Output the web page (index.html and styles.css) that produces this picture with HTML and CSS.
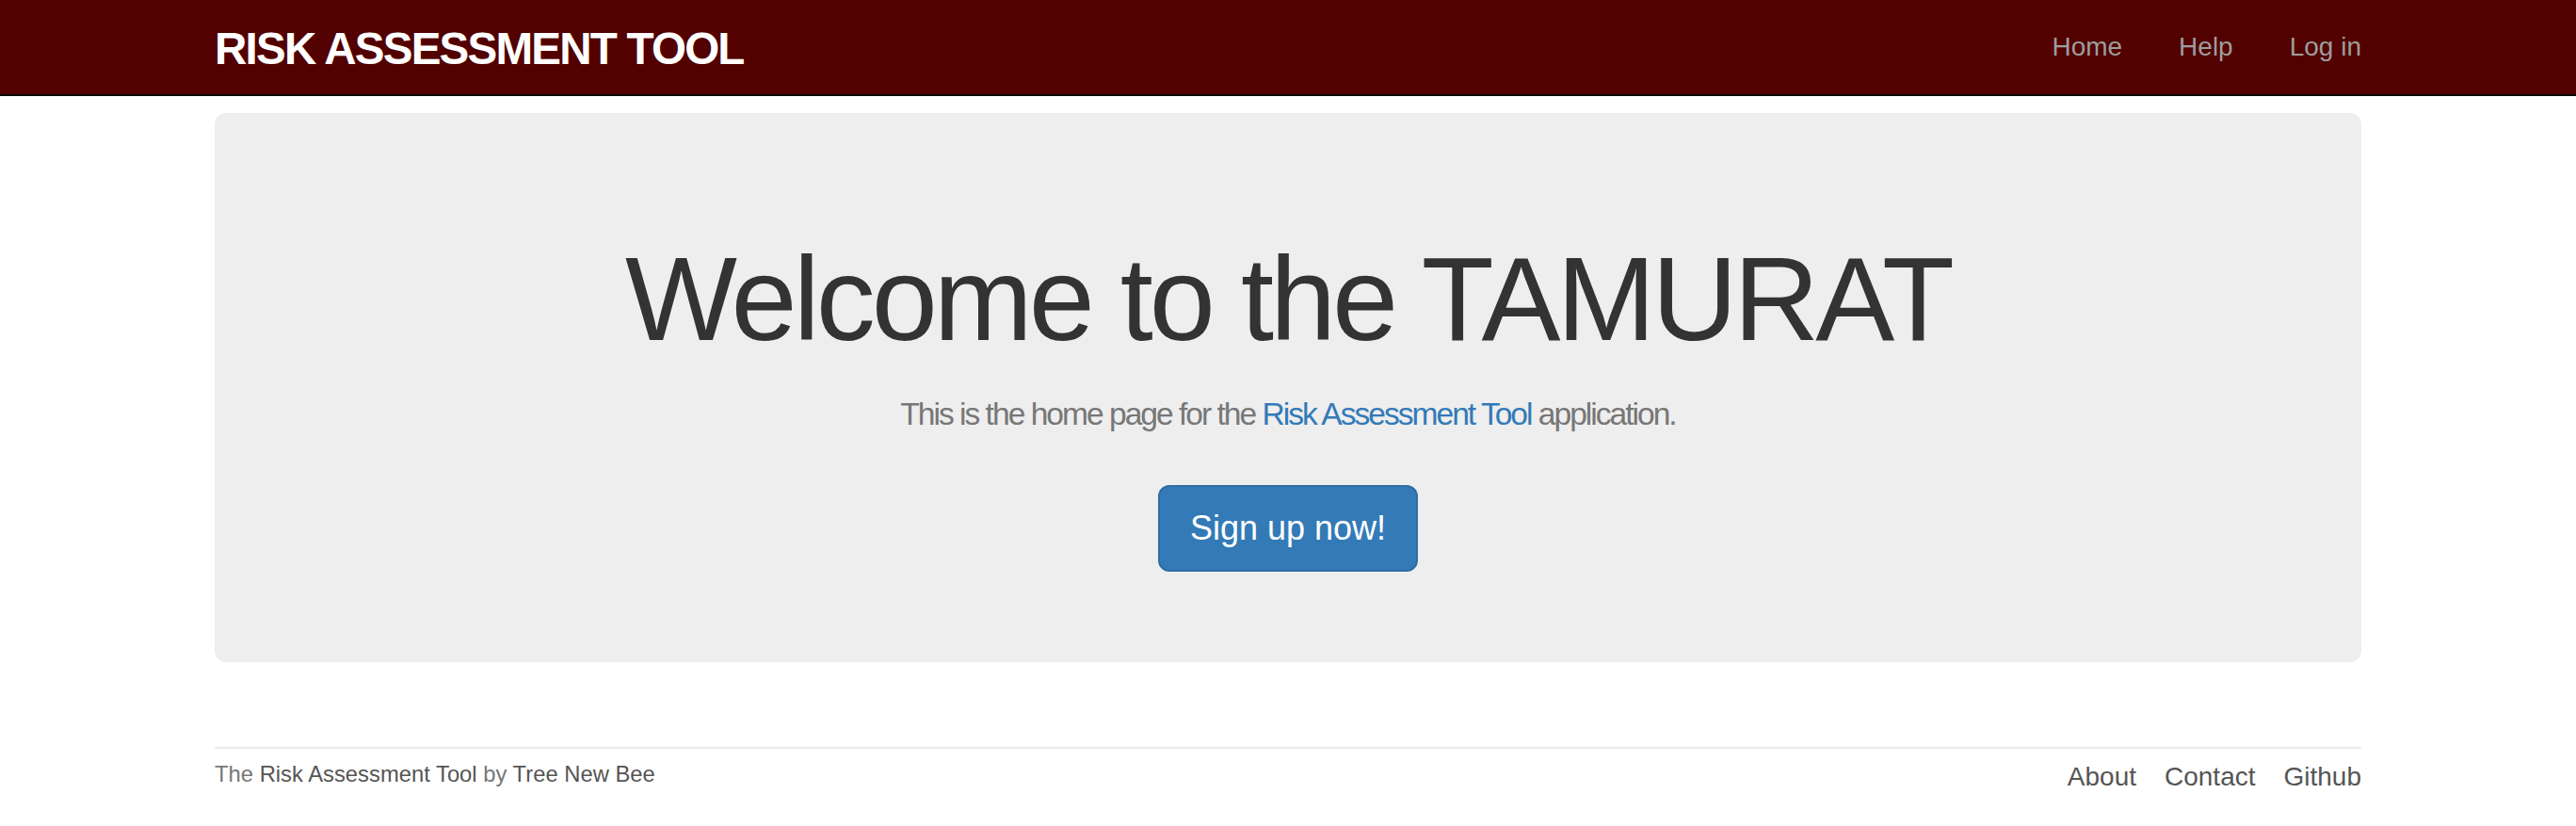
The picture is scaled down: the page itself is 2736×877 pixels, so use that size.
FILE: index.html
```html
<!DOCTYPE html>
<html lang="en">
<head>
<meta charset="utf-8">
<title>Risk Assessment Tool</title>
<link rel="stylesheet" href="styles.css">
</head>
<body>
  <header class="navbar">
    <div class="container navbar-inner">
      <a class="logo" href="#">Risk Assessment Tool</a>
      <nav>
        <ul class="nav">
          <li><a href="#">Home</a></li>
          <li><a href="#">Help</a></li>
          <li><a href="#">Log in</a></li>
        </ul>
      </nav>
    </div>
  </header>
  <main class="container">
    <section class="jumbotron">
      <h1 class="title">Welcome to the TAMURAT</h1>
      <h2 class="subtitle">This is the home page for the <a href="#">Risk Assessment Tool</a> application.</h2>
      <div class="cta">
        <a class="btn-primary" href="#">Sign up now!</a>
      </div>
    </section>
    <footer class="footer">
      <small class="credit">The <a href="#">Risk Assessment Tool</a> by <a href="#">Tree New Bee</a></small>
      <ul class="footer-links">
        <li><a href="#">About</a></li>
        <li><a href="#">Contact</a></li>
        <li><a href="#">Github</a></li>
      </ul>
    </footer>
  </main>
</body>
</html>
```
FILE: styles.css
```css
* { box-sizing: border-box; }

html, body {
  margin: 0;
  padding: 0;
  background: #fff;
}

body {
  font-family: "Liberation Sans", Arial, Helvetica, sans-serif;
  font-size: 28px;
  line-height: 40px;
  color: #333;
}

a { text-decoration: none; }

.container {
  width: 2280px;
  margin: 0 auto;
}

/* Navbar */
.navbar {
  height: 102px;
  background: #520000;
  border-bottom: 2px solid #080808;
}

.navbar-inner {
  display: flex;
  justify-content: space-between;
  align-items: flex-start;
}

.logo {
  padding-top: 18px;
  font-size: 47.6px;
  line-height: 68px;
  font-weight: bold;
  letter-spacing: -1.8px;
  text-transform: uppercase;
  color: #fff;
}

.nav {
  display: flex;
  list-style: none;
  margin: 0 -30px 0 0;
  padding: 0;
}

.nav a {
  display: block;
  padding: 30px;
  line-height: 40px;
  font-size: 28px;
  color: #9d9d9d;
}

/* Jumbotron */
main.container {
  padding-top: 18px;
}

.jumbotron {
  background: #eee;
  border-radius: 12px;
  padding: 96px 120px;
  text-align: center;
  margin-bottom: 90px;
}

.title {
  margin: 33px 0 0;
  font-size: 126px;
  line-height: 1.1;
  font-weight: 500;
  letter-spacing: -4px;
  color: #333;
}

.subtitle {
  margin: 34px 0 0;
  font-size: 33.6px;
  line-height: 1.1;
  font-weight: normal;
  letter-spacing: -2px;
  color: #777;
}

.subtitle a { color: #337ab7; }

.cta {
  display: flex;
  justify-content: center;
  margin-top: 56px;
}

.btn-primary {
  display: block;
  padding: 20px 32px;
  font-size: 36px;
  line-height: 48px;
  color: #fff;
  background: #337ab7;
  border: 2px solid #2e6da4;
  border-radius: 12px;
}

/* Footer */
.footer {
  border-top: 2px solid #eaeaea;
  padding-top: 10px;
  display: flex;
  justify-content: space-between;
  align-items: flex-start;
  color: #777;
}

.credit {
  font-size: 23.8px;
  line-height: 34px;
}

.credit a { color: #555; }

.footer-links {
  display: flex;
  list-style: none;
  margin: 0;
  padding: 0;
}

.footer-links li { margin-left: 30px; }

.footer-links a {
  font-size: 28px;
  line-height: 40px;
  color: #555;
}
```
